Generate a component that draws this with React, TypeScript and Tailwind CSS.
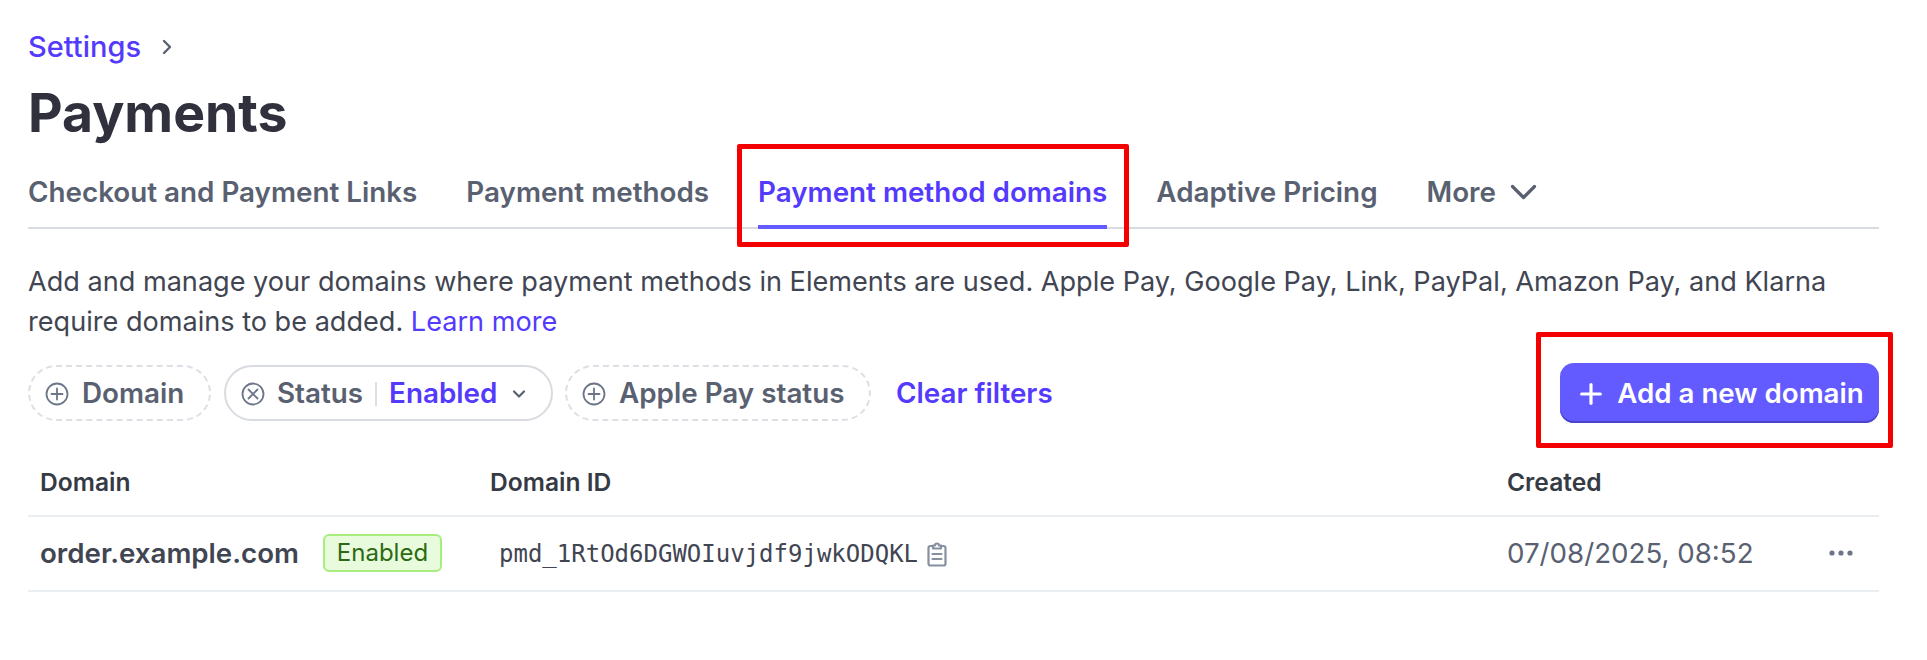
import { ChevronDown, ChevronRight, Plus } from "lucide-react";

const font = { fontFamily: "Inter, 'Noto Sans', sans-serif" };

function CirclePlus() {
  return (
    <svg width="24" height="24" viewBox="0 0 24 24" fill="none" stroke="#6c7688" strokeWidth="1.8" strokeLinecap="round">
      <circle cx="12" cy="12" r="10.5" />
      <path d="M12 6.5v11M6.5 12h11" />
    </svg>
  );
}

function CircleX() {
  return (
    <svg width="24" height="24" viewBox="0 0 24 24" fill="none" stroke="#6c7688" strokeWidth="1.8" strokeLinecap="round">
      <circle cx="12" cy="12" r="10.5" />
      <path d="M7.5 7.5l9 9M16.5 7.5l-9 9" />
    </svg>
  );
}

function ClipboardIcon() {
  return (
    <svg className="ml-[9px]" width="20" height="26" viewBox="0 0 20 26" fill="none" stroke="#8790a1" strokeWidth="2.2" strokeLinecap="round" strokeLinejoin="round">
      <path d="M6 5H3.5A2 2 0 0 0 1.5 7v15.5a2 2 0 0 0 2 2h13a2 2 0 0 0 2-2V7a2 2 0 0 0-2-2H14" />
      <path d="M6 7.5V4.5h2a2 2 0 0 1 4 0h2v3z" />
      <path d="M5.5 13h9M5.5 18h9" />
    </svg>
  );
}

function BigChevron() {
  return (
    <svg width="27" height="16" viewBox="0 0 27 16" fill="none" stroke="#596171" strokeWidth="3.2" strokeLinecap="round" strokeLinejoin="round">
      <path d="M2.5 2.5l11 11 11-11" />
    </svg>
  );
}

const tabs = ["Checkout and Payment Links", "Payment methods", "Payment method domains", "Adaptive Pricing"];

export default function App() {
  return (
    <div style={font} className="relative h-[660px] w-[1927px] overflow-hidden bg-white pl-[28px] pr-[48px] pt-[30px] antialiased">
      <div className="flex h-[34px] items-center">
        <span className="text-[29px] font-medium text-[#533afd]">Settings</span>
        <ChevronRight className="ml-[14px] h-[24px] w-[24px] text-[#596171]" strokeWidth={2.4} />
      </div>

      <h1 className="mt-[14px] h-[70px] text-[53.5px] font-bold leading-[70px] text-[#30313d]">Payments</h1>

      <div className="mt-[14px] flex h-[67px] gap-[49px] border-b-2 border-[#d8dbe0]">
        {tabs.map((t, i) => (
          <div
            key={t}
            className={
              i === 2
                ? "h-[67px] border-b-[4px] border-[#635bff] pt-[14px] text-[27.8px] font-semibold leading-[32px] text-[#533afd]"
                : "h-[67px] pt-[14px] text-[27.8px] font-semibold leading-[32px] text-[#596171]"
            }
          >
            {t}
          </div>
        ))}
        <div className="flex h-[46px] items-center gap-[14px] pt-[14px] text-[27.8px] font-semibold leading-[32px] text-[#596171]">
          More
          <BigChevron />
        </div>
      </div>

      <p className="mt-[33px] text-[27.1px] leading-[40px] text-[#414552]">
        Add and manage your domains where payment methods in Elements are used. Apple Pay, Google Pay, Link, PayPal, Amazon Pay, and Klarna
        <br />
        require domains to be added. <span className="text-[#533afd]">Learn more</span>
      </p>

      <div className="mt-[21px] flex h-[60px] items-center">
        <div className="flex h-[56px] w-[183px] items-center gap-[13px] rounded-full border-2 border-dashed border-[#dcdfe4] pl-[15px] pt-[2px] text-[27.8px] font-semibold text-[#596171]">
          <CirclePlus />
          Domain
        </div>
        <div className="ml-[13px] flex h-[56px] w-[329px] items-center rounded-full border-2 border-[#d8dbe0] pl-[15px] pt-[2px] text-[27.8px] font-semibold text-[#596171]">
          <CircleX />
          <span className="ml-[12px]">Status</span>
          <span className="mx-[12px] h-[24px] w-[2px] bg-[#dcdfe4]" />
          <span className="text-[#533afd]">Enabled</span>
          <ChevronDown className="ml-[12px] h-[20px] w-[20px] text-[#596171]" strokeWidth={2.6} />
        </div>
        <div className="ml-[12px] flex h-[56px] w-[306px] items-center gap-[13px] rounded-full border-2 border-dashed border-[#dcdfe4] pl-[15px] pt-[2px] text-[27.8px] font-semibold text-[#596171]">
          <CirclePlus />
          Apple Pay status
        </div>
        <span className="ml-[25px] pt-[2px] text-[27.8px] font-semibold text-[#533afd]">Clear filters</span>
        <button className="ml-auto flex h-[60px] w-[319px] items-center justify-center gap-[10px] rounded-[14px] bg-[#635bff] pt-[2px] text-[27.7px] font-semibold text-white shadow-[inset_0_-2px_0_#4a44c9]">
          <Plus className="h-[32px] w-[32px]" strokeWidth={2.4} />
          Add a new domain
        </button>
      </div>

      <div className="mt-[32px] grid h-[62px] grid-cols-[450px_1017px_1fr] items-center border-b-2 border-[#ebeef1] pl-[12px] pb-[6px] text-[24.6px] font-semibold text-[#353a44]">
        <span>Domain</span>
        <span>Domain ID</span>
        <span>Created</span>
      </div>

      <div className="grid h-[75px] grid-cols-[450px_1017px_1fr] items-center border-b-2 border-[#ebeef1] pl-[12px]">
        <div className="flex items-center gap-[24px]">
          <span className="text-[27.7px] font-semibold text-[#414552]">order.example.com</span>
          <span className="flex h-[38px] w-[119px] items-center justify-center rounded-[6px] border-2 border-[#a8ee7f] bg-[#e8fbdc] text-[24px] text-[#2b6a12]">Enabled</span>
        </div>
        <div className="flex items-center pl-[9px]">
          <span style={{ fontFamily: "'DejaVu Sans Mono', monospace" }} className="text-[24px] text-[#414552]">pmd_1RtOd6DGWOIuvjdf9jwkODQKL</span>
          <ClipboardIcon />
        </div>
        <div className="flex items-center justify-between pr-[26px]">
          <span className="text-[27.7px] text-[#596171]">07/08/2025, 08:52</span>
          <svg width="24" height="6" viewBox="0 0 24 6" fill="#6c7688">
            <circle cx="3" cy="3" r="2.6" />
            <circle cx="12" cy="3" r="2.6" />
            <circle cx="21" cy="3" r="2.6" />
          </svg>
        </div>
      </div>

      <div className="pointer-events-none absolute left-[737px] top-[144px] h-[103px] w-[392px] rounded-[2px] border-[5px] border-[#f50000]" />
      <div className="pointer-events-none absolute left-[1536px] top-[332px] h-[116px] w-[357px] rounded-[2px] border-[5px] border-[#f50000]" />
    </div>
  );
}
